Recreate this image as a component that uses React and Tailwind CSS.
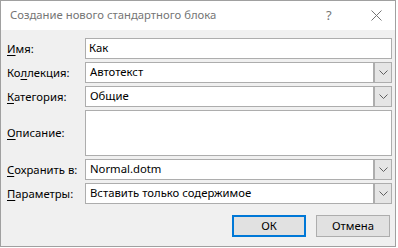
import React from 'react';

const font = { fontFamily: '"Noto Sans", "Open Sans", sans-serif' };

function Chevron() {
  return (
    <svg width="9" height="5" viewBox="0 0 9 5" className="block">
      <path d="M0.5 0.5 L4.5 4.5 L8.5 0.5" fill="none" stroke="#606060" strokeWidth="1" />
    </svg>
  );
}

function Label({ text, u }) {
  // u = index of the underlined (access key) letter
  return (
    <span className="text-[11.3px] text-black leading-none">
      {text.slice(0, u)}
      <span className="underline underline-offset-2">{text[u]}</span>
      {text.slice(u + 1)}
    </span>
  );
}

function TextField({ value, tall }) {
  return (
    <div
      className={`${tall ? 'h-[46px]' : 'h-[21px]'} bg-white border border-[#adadad] flex items-center pl-[3px] text-[11.3px] text-black`}
    >
      {value}
    </div>
  );
}

function Combo({ value }) {
  return (
    <div className="h-[21px] bg-white border border-[#adadad] flex text-[11.3px] text-black">
      <div className="flex-1 flex items-center pl-[4px]">{value}</div>
      <div className="w-[18px] bg-[#e5e5e5] border-l-2 border-[#adadad] flex items-center justify-center">
        <Chevron />
      </div>
    </div>
  );
}

export default function App() {
  const rows = [
    { label: 'Имя:', u: 0, field: <TextField value="Как" /> },
    { label: 'Коллекция:', u: 2, field: <Combo value="Автотекст" /> },
    { label: 'Категория:', u: 0, field: <Combo value="Общие" /> },
    { label: 'Описание:', u: 0, field: <TextField tall /> },
    { label: 'Сохранить в:', u: 0, field: <Combo value="Normal.dotm" /> },
    { label: 'Параметры:', u: 0, field: <Combo value="Вставить только содержимое" /> },
  ];

  return (
    <div className="w-[398px] h-[248px] bg-white" style={font}>
      <div className="w-[396px] h-[247px] border border-[#a0a0a0] flex flex-col">
        {/* Title bar */}
        <div className="h-[29px] bg-white flex items-center pl-[9px] shrink-0">
          <span className="text-[11.3px] text-[#757575] flex-1">Создание нового стандартного блока</span>
          <span className="text-[13px] text-[#757575] w-[10px] mr-[35px]">?</span>
          <svg width="11" height="11" viewBox="0 0 11 11" className="mr-[13px]">
            <path d="M0.5 0.5 L10.5 10.5 M10.5 0.5 L0.5 10.5" stroke="#757575" strokeWidth="1" />
          </svg>
        </div>

        {/* Body */}
        <div className="flex-1 bg-[#f0f0f0] pt-[8px] pl-[6px] flex flex-col">
          <div className="grid grid-cols-[78px_307px] gap-y-[3px] items-center">
            {rows.map((r) => (
              <React.Fragment key={r.label}>
                <Label text={r.label} u={r.u} />
                {r.field}
              </React.Fragment>
            ))}
          </div>

          <div className="flex justify-end gap-[10px] mt-[11px] w-[383px]">
            <button className="w-[74px] h-[22px] bg-[#e1e1e1] border-2 border-[#0078d7] text-[11.3px] text-black flex items-center justify-center">
              ОК
            </button>
            <button className="w-[74px] h-[22px] bg-[#e1e1e1] border border-[#adadad] text-[11.3px] text-black flex items-center justify-center">
              Отмена
            </button>
          </div>
        </div>
      </div>
    </div>
  );
}
